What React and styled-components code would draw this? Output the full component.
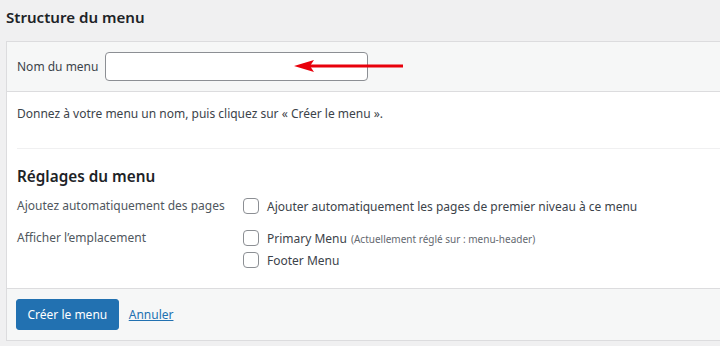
import React from "react";
import styled, { createGlobalStyle } from "styled-components";

const GlobalStyle = createGlobalStyle`
  html, body { margin: 0; padding: 0; background: #f0f0f1; overflow: hidden; }
  body {
    font-family: "Noto Sans", "Open Sans", "Liberation Sans", sans-serif;
    font-size: 12px;
    color: #3c434a;
  }
`;

const Page = styled.div`
  width: 720px;
  height: 346px;
  padding-left: 6px;
  box-sizing: border-box;
  overflow: hidden;
`;

const Title = styled.h2`
  margin: 0;
  padding-top: 5px;
  font-size: 15.1px;
  font-weight: 600;
  line-height: 24px;
  color: #1d2327;
`;

const Panel = styled.div`
  margin-top: 12px;
  width: 730px;
  background: #fff;
  border: 1px solid #dcdcde;
`;

const Header = styled.div`
  position: relative;
  height: 49px;
  background: #f6f7f7;
  border-bottom: 1px solid #dcdcde;
  display: flex;
  align-items: center;
  padding: 0 10px;
  gap: 7px;
`;

const FieldLabel = styled.label`
  color: #3c434a;
`;

const TextInput = styled.input`
  width: 263px;
  height: 29px;
  box-sizing: border-box;
  border: 1px solid #8c8f94;
  border-radius: 4px;
  background: #fff;
  padding: 0 8px;
  font: inherit;
`;

const Arrow = styled.svg`
  position: absolute;
  left: 285px;
  top: 16px;
`;

const Body = styled.div`
  padding: 0 0 17px 10px;
`;

const Intro = styled.p`
  margin: 12px 0 0;
  line-height: 20px;
`;

const Divider = styled.hr`
  margin: 24px 0 0;
  border: 0;
  border-top: 1px solid #f0f0f1;
`;

const SubTitle = styled.h3`
  margin: 15px 0 0;
  font-size: 15.3px;
  font-weight: 600;
  line-height: 24px;
  color: #1d2327;
`;

const SettingRow = styled.div`
  display: grid;
  grid-template-columns: 226px 1fr;
  margin-top: ${(p) => p.$gap}px;
`;

const RowLabel = styled.div`
  line-height: 22px;
  color: #50575e;
`;

const Options = styled.div`
  display: flex;
  flex-direction: column;
`;

const Option = styled.label`
  display: flex;
  align-items: center;
  gap: 8px;
  height: 22px;
  color: #3c434a;
`;

const Box = styled.span`
  width: 16px;
  height: 16px;
  box-sizing: border-box;
  border: 1px solid #8c8f94;
  border-radius: 4px;
  background: #fff;
  flex: none;
`;

const Note = styled.span`
  font-size: 10px;
  color: #646970;
  margin-left: 4px;
`;

const Footer = styled.div`
  background: #f6f7f7;
  border-top: 1px solid #dcdcde;
  padding: 10px 9px;
  display: flex;
  align-items: center;
`;

const Button = styled.button`
  height: 31px;
  padding: 0 10.5px;
  background: #2271b1;
  border: 1px solid #2271b1;
  border-radius: 3px;
  color: #fff;
  font: inherit;
`;

const Link = styled.a`
  margin-left: 10px;
  color: #2271b1;
  text-decoration: underline;
`;

export default function App() {
  return (
    <Page>
      <GlobalStyle />
      <Title>Structure du menu</Title>
      <Panel>
        <Header>
          <FieldLabel>Nom du menu</FieldLabel>
          <TextInput type="text" />
          <Arrow width="120" height="16" viewBox="0 0 120 16">
            <polygon points="2,8 22,2 18,8 22,14" fill="#e8000b" />
            <rect x="16" y="6.5" width="95" height="3" fill="#e8000b" />
          </Arrow>
        </Header>
        <Body>
          <Intro>Donnez à votre menu un nom, puis cliquez sur « Créer le menu ».</Intro>
          <Divider />
          <SubTitle>Réglages du menu</SubTitle>
          <SettingRow $gap={7}>
            <RowLabel>Ajoutez automatiquement des pages</RowLabel>
            <Options>
              <Option>
                <Box />
                Ajouter automatiquement les pages de premier niveau à ce menu
              </Option>
            </Options>
          </SettingRow>
          <SettingRow $gap={10}>
            <RowLabel>Afficher l’emplacement</RowLabel>
            <Options>
              <Option>
                <Box />
                <span>
                  Primary Menu<Note>(Actuellement réglé sur : menu-header)</Note>
                </span>
              </Option>
              <Option>
                <Box />
                Footer Menu
              </Option>
            </Options>
          </SettingRow>
        </Body>
        <Footer>
          <Button>Créer le menu</Button>
          <Link href="#">Annuler</Link>
        </Footer>
      </Panel>
    </Page>
  );
}
